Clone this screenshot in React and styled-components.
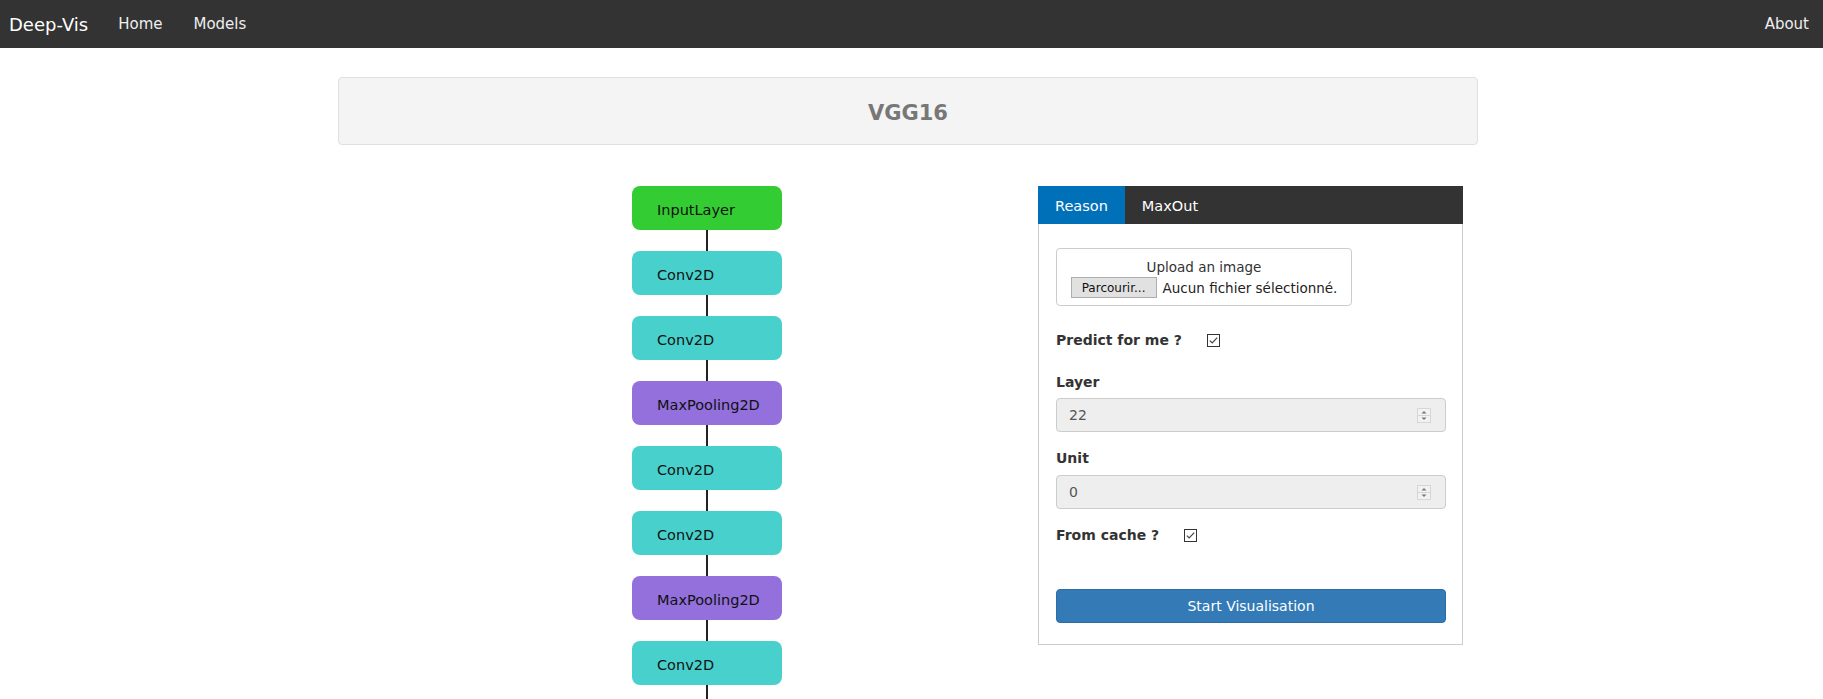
import React from 'react';
import styled, { createGlobalStyle } from 'styled-components';

const GlobalStyle = createGlobalStyle`
  html, body {
    margin: 0;
    padding: 0;
    background: #fff;
    font-family: "DejaVu Sans", Verdana, sans-serif;
    font-size: 14px;
    color: #333;
  }
  * { box-sizing: border-box; }
`;

const LAYERS = [
  'InputLayer', 'Conv2D', 'Conv2D', 'MaxPooling2D',
  'Conv2D', 'Conv2D', 'MaxPooling2D', 'Conv2D',
];

const nodeColor = (kind) => {
  if (kind === 'InputLayer') return '#33cd33';
  if (kind === 'MaxPooling2D') return '#9370db';
  return '#48d1cc';
};

const Navbar = styled.nav`
  display: flex;
  align-items: center;
  height: 48px;
  background: #333;
  padding: 0 14px 0 9px;
`;

const Brand = styled.a`
  font-size: 18px;
  color: #fff;
  margin-right: 30px;
  text-decoration: none;
`;

const NavLink = styled.a`
  font-size: 15px;
  color: #eee;
  margin-right: ${props => (props.push ? 'auto' : props.end ? '0' : '31px')};
  text-decoration: none;
  cursor: pointer;
`;

const Page = styled.div`
  padding-right: 7px;
`;

const Container = styled.div`
  width: 1140px;
  margin: 0 auto;
`;

const Header = styled.div`
  margin-top: 29px;
  height: 68px;
  display: flex;
  align-items: center;
  justify-content: center;
  padding-top: 3px;
  background: #f4f4f4;
  border: 1px solid #e0e0e0;
  border-radius: 4px;
`;

const Title = styled.h2`
  margin: 0;
  font-size: 21px;
  font-weight: bold;
  color: #777;
`;

const Body = styled.div`
  display: flex;
  align-items: flex-start;
  margin-top: 41px;
`;

const Graph = styled.div`
  display: flex;
  flex-direction: column;
  align-items: center;
  width: 150px;
  margin-left: 294px;
  margin-right: 256px;
`;

const Node = styled.div`
  width: 150px;
  height: 44px;
  display: flex;
  align-items: center;
  padding: 3px 0 0 25px;
  border-radius: 8px;
  background: ${props => props.color};
  color: #111;
  font-size: 14.5px;
`;

const Edge = styled.div`
  width: 2px;
  height: 21px;
  background: #222;
`;

const Panel = styled.div`
  width: 425px;
`;

const Tabs = styled.div`
  display: flex;
  height: 38px;
  background: #333;
`;

const Tab = styled.div`
  display: flex;
  align-items: center;
  padding: 1px 17px 0;
  font-size: 14.5px;
  color: #fff;
  background: ${props => (props.active ? '#0070b8' : 'transparent')};
  cursor: pointer;
`;

const PanelBody = styled.div`
  border: 1px solid #ccc;
  border-top: none;
  padding: 24px 16px 21px 17px;
`;

const UploadBox = styled.div`
  width: 296px;
  height: 58px;
  border: 1px solid #ccc;
  border-radius: 4px;
  padding: 9px 0 7px;
  display: flex;
  flex-direction: column;
  align-items: center;
  gap: 1px;
  font-size: 13.5px;
  margin-bottom: 24px;
`;

const UploadTitle = styled.div`
  line-height: 18px;
`;

const FileRow = styled.div`
  display: flex;
  align-items: center;
  gap: 6px;
`;

const FileButton = styled.span`
  display: inline-flex;
  align-items: center;
  justify-content: center;
  width: 86px;
  height: 21px;
  background: #e1e1e1;
  border: 1px solid #adadad;
  font-size: 12px;
  color: #111;
`;

const FileName = styled.span`
  color: #222;
`;

const CheckRow = styled.div`
  display: flex;
  align-items: center;
  height: 20px;
  margin-bottom: ${props => props.mb}px;
`;

const Label = styled.label`
  display: block;
  font-weight: bold;
  font-size: 14px;
  line-height: 20px;
  color: #333;
  margin-bottom: ${props => props.mb || 0}px;
`;

const CheckBox = styled.svg`
  margin-left: 25px;
  flex: none;
`;

const NumberField = styled.div`
  display: flex;
  align-items: center;
  height: 34px;
  padding: 0 14px 0 12px;
  background: #eee;
  border: 1px solid #ccc;
  border-radius: 4px;
  color: #555;
  font-size: 14px;
  margin-bottom: 16px;
`;

const FieldValue = styled.span`
  flex: 1;
`;

const Spinner = styled.svg`
  flex: none;
`;

const StartButton = styled.button`
  display: block;
  width: 100%;
  height: 34px;
  margin-top: 44px;
  background: #337ab7;
  border: 1px solid #2e6da4;
  border-radius: 4px;
  color: #fff;
  font-family: inherit;
  font-size: 14px;
  cursor: pointer;
`;

const Check = () => (
  <CheckBox width="13" height="13" viewBox="0 0 13 13">
    <rect x="0.5" y="0.5" width="12" height="12" fill="#fff" stroke="#333" />
    <path d="M2.8 6.6 L5.2 9 L10.2 3.6" fill="none" stroke="#444" strokeWidth="1.2" />
  </CheckBox>
);

const Spin = () => (
  <Spinner width="14" height="15" viewBox="0 0 14 15">
    <rect x="0.5" y="0.5" width="13" height="14" fill="#f2f2f2" stroke="#d6d6d6" />
    <line x1="1" y1="7.5" x2="13" y2="7.5" stroke="#d6d6d6" />
    <path d="M4.5 5.5 L7 3 L9.5 5.5 Z" fill="#777" />
    <path d="M4.5 9.5 L7 12 L9.5 9.5 Z" fill="#777" />
  </Spinner>
);

const App = () => (
  <>
    <GlobalStyle />
    <Navbar>
      <Brand>Deep-Vis</Brand>
      <NavLink>Home</NavLink>
      <NavLink push>Models</NavLink>
      <NavLink end>About</NavLink>
    </Navbar>
    <Page>
      <Container>
        <Header>
          <Title>VGG16</Title>
        </Header>
        <Body>
          <Graph>
            {LAYERS.map((kind, i) => (
              <React.Fragment key={i}>
                {i > 0 && <Edge />}
                <Node color={nodeColor(kind)}>{kind}</Node>
              </React.Fragment>
            ))}
            <Edge />
          </Graph>
          <Panel>
            <Tabs>
              <Tab active>Reason</Tab>
              <Tab>MaxOut</Tab>
            </Tabs>
            <PanelBody>
              <UploadBox>
                <UploadTitle>Upload an image</UploadTitle>
                <FileRow>
                  <FileButton>Parcourir...</FileButton>
                  <FileName>Aucun fichier sélectionné.</FileName>
                </FileRow>
              </UploadBox>
              <CheckRow mb={22}>
                <Label>Predict for me ?</Label>
                <Check />
              </CheckRow>
              <Label mb={6}>Layer</Label>
              <NumberField>
                <FieldValue>22</FieldValue>
                <Spin />
              </NumberField>
              <Label mb={7}>Unit</Label>
              <NumberField>
                <FieldValue>0</FieldValue>
                <Spin />
              </NumberField>
              <CheckRow mb={0}>
                <Label>From cache ?</Label>
                <Check />
              </CheckRow>
              <StartButton>Start Visualisation</StartButton>
            </PanelBody>
          </Panel>
        </Body>
      </Container>
    </Page>
  </>
);

export default App;
